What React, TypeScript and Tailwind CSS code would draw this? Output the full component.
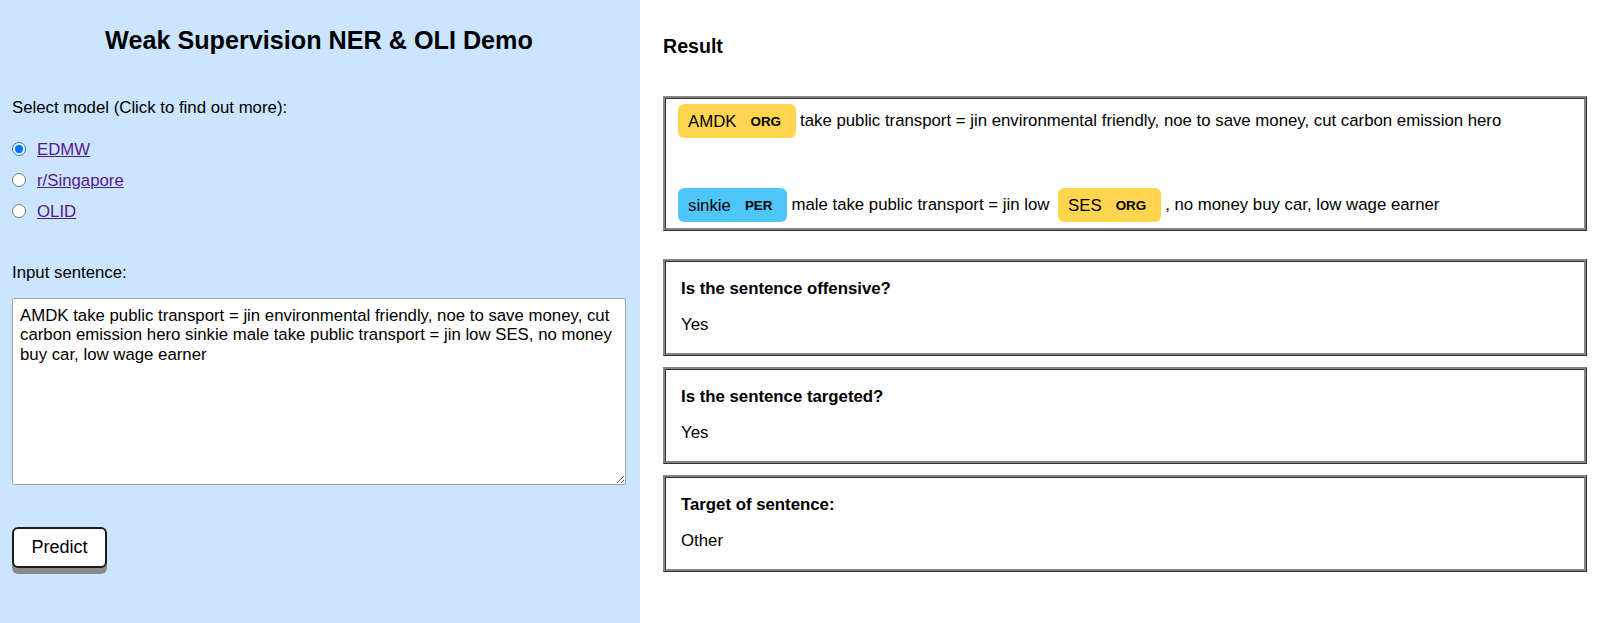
import React from "react";

const sentence =
  "AMDK take public transport = jin environmental friendly, noe to save money, cut carbon emission hero sinkie male take public transport = jin low SES, no money buy car, low wage earner";

const models = [
  { id: "edmw", label: "EDMW", checked: true },
  { id: "sg", label: "r/Singapore", checked: false },
  { id: "olid", label: "OLID", checked: false },
];

const questions = [
  { q: "Is the sentence offensive?", a: "Yes" },
  { q: "Is the sentence targeted?", a: "Yes" },
  { q: "Target of sentence:", a: "Other" },
];

function Ent({ text, label, color }: { text: string; label: string; color: string }) {
  return (
    <mark
      className={`mx-[4px] rounded-[6px] py-[7.5px] pl-[10px] pr-[15px] leading-none text-black ${color}`}
    >
      {text}
      <span className="ml-[14px] align-middle text-[13.4px] font-bold leading-none">{label}</span>
    </mark>
  );
}

export default function App() {
  return (
    <div className="flex min-h-[623px] w-full font-['Liberation_Sans',Arial,sans-serif] text-[16.8px] text-black">
      {/* left: input form */}
      <div className="w-[640px] shrink-0 bg-[#cce5ff] pl-[12px] pr-[14px]">
        <h1 className="mt-[26px] text-center text-[25.2px] font-bold leading-[29px]">
          Weak Supervision NER &amp; OLI Demo
        </h1>
        <p className="mt-[43px] leading-[19px]">Select model (Click to find out more):</p>
        <div className="mt-[22.5px] flex flex-col gap-[12px]">
          {models.map((m) => (
            <label key={m.id} className="flex h-[19px] items-center">
              <input
                type="radio"
                name="model"
                defaultChecked={m.checked}
                className="m-0 h-[14px] w-[14px]"
              />
              <a href="#" className="ml-[11px] leading-[19px] text-[#551a8b] underline">
                {m.label}
              </a>
            </label>
          ))}
        </div>
        <p className="mt-[42px] leading-[19px]">Input sentence:</p>
        <textarea
          defaultValue={sentence}
          className="mt-[16.5px] block h-[187px] w-[614px] rounded-[2px] border border-[#a6a6a6] bg-white px-[7px] py-[7px] text-[16.8px] leading-[19.3px] text-black"
        />
        <button className="mt-[41.5px] h-[41px] w-[95px] rounded-[6px] border-2 border-[#1c1c1c] bg-white text-[18px] shadow-[0_6px_0_#8a8a8a]">
          Predict
        </button>
      </div>

      {/* right: results */}
      <div className="flex-1 bg-white pl-[23px] pr-[13px]">
        <h3 className="mt-[35px] text-[19.6px] font-bold leading-[23px]">Result</h3>
        <div className="mt-[38px] border-[3px] border-[#858585] bg-white px-[8px] pb-[2px] pt-px leading-[42px] [border-style:ridge]">
          <Ent text="AMDK" label="ORG" color="bg-[#ffd54f]" />
          take public transport = jin environmental friendly, noe to save money, cut carbon emission hero
          <br />
          <br />
          <Ent text="sinkie" label="PER" color="bg-[#4fc6f9]" />
          male take public transport = jin low <Ent text="SES" label="ORG" color="bg-[#ffd54f]" />
          , no money buy car, low wage earner
        </div>
        <div className="mt-[28px] flex flex-col gap-[11px]">
          {questions.map((x) => (
            <div
              key={x.q}
              className="flex h-[97px] flex-col gap-[16px] border-[3px] border-[#858585] pl-[15px] pt-[17px] [border-style:ridge]"
            >
              <div className="font-bold leading-[20px]">{x.q}</div>
              <div className="leading-[20px]">{x.a}</div>
            </div>
          ))}
        </div>
      </div>
    </div>
  );
}
